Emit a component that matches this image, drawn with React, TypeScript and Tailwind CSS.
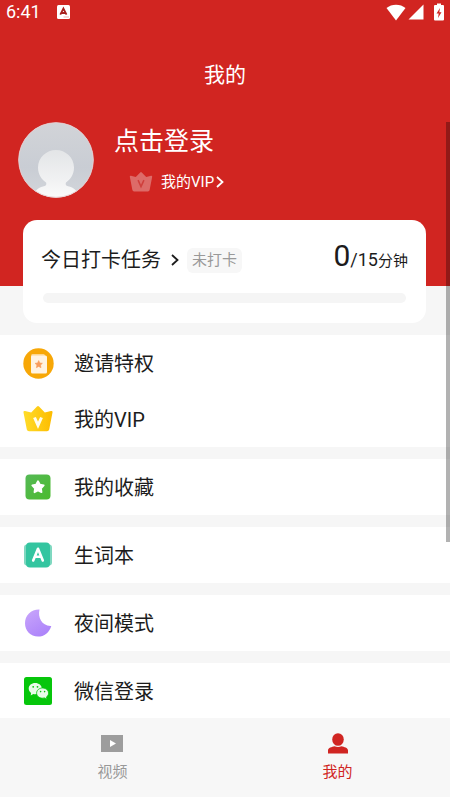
import type { ReactNode } from "react";

function Crown({ className, muted = false }: { className?: string; muted?: boolean }) {
  return (
    <svg viewBox="0 0 30 26" className={className} aria-hidden="true">
      <defs>
        <linearGradient id="crownGold" x1="0" y1="0" x2="1" y2="0">
          <stop offset="0" stopColor="#ffdc2a" />
          <stop offset="1" stopColor="#fdbc00" />
        </linearGradient>
      </defs>
      <path
        d="M14 0.6 Q15 -0.4 16 0.6 L21.8 6.6 L28 5 Q29.8 4.6 29.5 6.4 L26.2 23.4 Q25.8 25.2 24 25.2 H6 Q4.2 25.2 3.8 23.4 L0.5 6.4 Q0.2 4.6 2 5 L8.200 6.6 Z"
        fill={muted ? "#dd6b68" : "url(#crownGold)"}
      />
      <path
        d={muted ? "M11.2 10.5 L15 19 L18.8 10.5" : "M11.5 11.5 L15 19.3 L18.5 11.5"}
        fill="none"
        stroke={muted ? "#cf3f3c" : "#fffdf0"}
        strokeWidth={muted ? 2 : 3}
      />
    </svg>
  );
}

function InviteIcon() {
  return (
    <svg viewBox="0 0 32 32" className="size-8" aria-hidden="true">
      <circle cx="16.5" cy="16.5" r="15.2" fill="#f7a707" />
      <rect x="9" y="7" width="14" height="18" rx="1.5" fill="#fcd58f" />
      <rect x="9" y="8.5" width="16" height="18" rx="1.5" fill="#fff3e2" />
      <path d="M16.7 13.6 L17.8 16 L20.4 16.3 L18.5 18.1 L19 20.7 L16.7 19.4 L14.4 20.7 L14.9 18.1 L13 16.3 L15.6 16 Z" fill="#f99c5c" stroke="#f99c5c" strokeWidth="0.6" />
    </svg>
  );
}

function FavoriteIcon() {
  return (
    <svg viewBox="0 0 26 26" className="size-[26px]" aria-hidden="true">
      <defs>
        <linearGradient id="favGreen" x1="0" y1="0" x2="1" y2="1">
          <stop offset="0" stopColor="#55b956" />
          <stop offset="1" stopColor="#4bbb2e" />
        </linearGradient>
      </defs>
      <rect x="0.5" y="0.5" width="25" height="25" rx="4" fill="url(#favGreen)" />
      <path d="M13 7.2 L14.9 10.7 L18.7 11.4 L16 14.3 L16.5 18.2 L13 16.5 L9.5 18.2 L10 14.3 L7.3 11.4 L11.1 10.7 Z" fill="#fff" stroke="#fff" strokeWidth="1.8" strokeLinejoin="round" />
    </svg>
  );
}

function WordsIcon() {
  return (
    <svg viewBox="0 0 28 26" className="h-[26px] w-7" aria-hidden="true">
      <rect x="0" y="2.5" width="28" height="21" rx="3" fill="#7fd8c0" />
      <rect x="2" y="0.5" width="24" height="25" rx="4" fill="#34c5a0" />
      <path d="M9.2 18.5 L14 6.8 L18.8 18.5 M11 14.8 H17" fill="none" stroke="#fff" strokeWidth="2.6" strokeLinecap="round" strokeLinejoin="round" />
    </svg>
  );
}

function MoonIcon() {
  return (
    <svg viewBox="0 0 28 28" className="size-7" aria-hidden="true">
      <defs>
        <linearGradient id="moonPurple" x1="0" y1="0" x2="0.6" y2="1">
          <stop offset="0" stopColor="#c9a6fb" />
          <stop offset="1" stopColor="#ad84fa" />
        </linearGradient>
      </defs>
      <path d="M15.5 0.6 C13.5 8.5 18 17.5 27.3 16.9 C25.5 23.3 20.2 27.6 14 27.6 C6.5 27.6 1 21.7 1 14.3 C1 6.5 7.2 0.3 15.5 0.6 Z" fill="url(#moonPurple)" />
    </svg>
  );
}

function WeChatIcon() {
  return (
    <svg viewBox="0 0 28 28" className="size-7" aria-hidden="true">
      <rect width="28" height="28" rx="2.5" fill="#06c60b" />
      <path d="M11.2 6 C7.5 6 4.7 8.4 4.7 11.6 C4.7 13.4 5.6 15 7.1 16 L6.7 18.6 L9.3 17 C10 17.2 10.6 17.2 11.2 17.2 C15 17.2 17.8 14.8 17.8 11.6 C17.8 8.4 15 6 11.2 6 Z" fill="#e9fbe9" />
      <path d="M18.6 11 C15.2 11 12.6 13.2 12.6 16.1 C12.6 19 15.2 21.2 18.6 21.2 C19.3 21.2 20 21.1 20.6 20.9 L22.9 22.2 L22.5 19.9 C23.8 19 24.6 17.6 24.6 16.1 C24.6 13.2 22 11 18.6 11 Z" fill="#e9fbe9" stroke="#06c60b" strokeWidth="0.8" />
      <circle cx="9.2" cy="9.8" r="0.9" fill="#06c60b" />
      <circle cx="13.5" cy="9.8" r="0.9" fill="#06c60b" />
      <circle cx="16.6" cy="14.6" r="0.8" fill="#06c60b" />
      <circle cx="20.6" cy="14.6" r="0.8" fill="#06c60b" />
    </svg>
  );
}

function Avatar() {
  return (
    <svg viewBox="0 0 76 76" className="size-[76px] shrink-0" aria-hidden="true">
      <defs>
        <linearGradient id="avatarBack" x1="0" y1="0" x2="0" y2="1">
          <stop offset="0" stopColor="#d2d4d8" />
          <stop offset="0.6" stopColor="#c9cdd4" />
          <stop offset="1" stopColor="#d3d6db" />
        </linearGradient>
        <linearGradient id="avatarBody" x1="0" y1="0" x2="0" y2="1">
          <stop offset="0" stopColor="#e3e5e7" />
          <stop offset="0.6" stopColor="#f0f1f2" />
          <stop offset="1" stopColor="#fbfbfb" />
        </linearGradient>
        <clipPath id="avatarClip">
          <circle cx="38" cy="38" r="37.5" />
        </clipPath>
      </defs>
      <g clipPath="url(#avatarClip)">
        <rect width="76" height="76" fill="url(#avatarBack)" />
        <path d="M38 28 C47.5 28 56 35.5 56 45.5 C56 53 52 57.5 48 60.5 C47 63 48.5 64 51 64.5 C56 65.7 59.5 68.5 62 76 H14 C16.5 68.5 20 65.7 25 64.5 C27.5 64 29 63 28 60.5 C24 57.5 20 53 20 45.5 C20 35.5 28.5 28 38 28 Z" fill="url(#avatarBody)" />
      </g>
      <circle cx="38" cy="38" r="37.3" fill="none" stroke="#e6cfd1" strokeWidth="0.9" />
    </svg>
  );
}

function Chevron({ className }: { className?: string }) {
  return (
    <svg viewBox="0 0 8 12" className={className} fill="none" stroke="currentColor" strokeWidth="1.8" aria-hidden="true">
      <path d="M1 1 L6.5 6 L1 11" />
    </svg>
  );
}

function StatusBar() {
  return (
    <div className="flex h-6 items-center justify-between px-1.5">
      <div className="flex items-center gap-4">
        <span className="text-lg leading-6">6:41</span>
        <svg viewBox="0 0 13 14" className="h-3.5 w-[13px]" aria-hidden="true">
          <rect width="13" height="14" rx="1.5" fill="#fff" />
          <path d="M3.3 9.7 L6.4 3.5 L9.5 9.7 M4.4 8 H8.4" fill="none" stroke="#a8201e" strokeWidth="1.8" />
          <path d="M6.5 12 H12" stroke="#eeb0ae" strokeWidth="1" />
        </svg>
      </div>
      <div className="flex items-center gap-0.5">
        <svg viewBox="0 0 20 17" className="h-[17px] w-5" fill="#fff" aria-hidden="true">
          <path d="M0.5 4 C5.5 -0.5 14.5 -0.5 19.5 4 L10 16.5 Z" />
        </svg>
        <svg viewBox="0 0 16 16" className="size-4" fill="#fff" aria-hidden="true">
          <path d="M15.5 0.5 V15.5 H0.5 Z" />
        </svg>
        <svg viewBox="0 0 10 18" className="ml-2 h-[18px] w-2.5" aria-hidden="true">
          <path d="M3 0.5 H7 V2 H9 Q10 2 10 3 V16.5 Q10 17.5 9 17.5 H1 Q0 17.5 0 16.5 V3 Q0 2 1 2 H3 Z" fill="#fff" />
          <path d="M6 5 L2.5 10.5 H4.7 L4 15 L7.5 9.3 H5.3 Z" fill="#d02522" />
        </svg>
      </div>
    </div>
  );
}

function Row({ icon, label }: { icon: ReactNode; label: string }) {
  return (
    <button type="button" className="flex h-14 w-full items-center bg-white pl-[22px] text-left">
      <span className="flex w-8 justify-center">{icon}</span>
      <span className="ml-5 pt-0.5 text-xl text-[#1c1c1c]">{label}</span>
    </button>
  );
}

export default function App() {
  return (
    <div className="flex h-screen flex-col bg-[#f6f6f6] font-[Roboto,'Noto_Sans_CJK_SC',sans-serif]">
      <main className="relative min-h-0 flex-1 overflow-hidden">
        <header className="bg-[#d12521] pb-[88px] text-white">
          <StatusBar />
          <h1 className="pt-9 text-center text-[21px] leading-[30px]">我的</h1>
          <div className="flex items-center pt-8 pl-[18px]">
            <Avatar />
            <div className="ml-5 flex flex-col gap-2 pb-0.5">
              <button type="button" className="text-left text-[25px] leading-9">点击登录</button>
              <button type="button" className="ml-[15px] flex items-center pt-0.5 text-[15px] leading-6">
                <Crown muted className="mr-2 h-5 w-6" />
                我的VIP
                <Chevron className="ml-0.5 h-3 w-2" />
              </button>
            </div>
          </div>
        </header>

        <section className="relative mr-6 ml-[23px] -mt-[66px] rounded-[14px] bg-white px-[18px] pt-4 pb-5">
          <div className="flex h-12 items-center">
            <button type="button" className="flex items-center text-xl text-[#1c1c1c]">
              今日打卡任务
              <Chevron className="ml-2.5 h-3 w-2" />
            </button>
            <span className="ml-2 rounded-md bg-[#f7f7f7] px-[5px] text-[15px] leading-[25px] text-[#999]">未打卡</span>
            <p className="ml-auto pb-2.5 text-[#1c1c1c]">
              <span className="text-[30px]">0</span>
              <span className="text-lg">/15</span>
              <span className="text-[15px]">分钟</span>
            </p>
          </div>
          <div className="mx-0.5 mt-[9px] h-2.5 rounded-full bg-[#f5f5f5]" />
        </section>

        <div className="flex flex-col gap-3 pt-3">
          <div>
            <Row icon={<InviteIcon />} label="邀请特权" />
            <Row icon={<Crown className="h-[26px] w-[30px]" />} label="我的VIP" />
          </div>
          <Row icon={<FavoriteIcon />} label="我的收藏" />
          <Row icon={<WordsIcon />} label="生词本" />
          <Row icon={<MoonIcon />} label="夜间模式" />
          <Row icon={<WeChatIcon />} label="微信登录" />
        </div>

        <div className="absolute top-[122px] right-0 h-[420px] w-1 bg-black/30" />
      </main>

      <nav className="flex h-[79px] shrink-0 bg-[#f7f7f7] text-[15px] leading-6">
        <button type="button" className="flex flex-1 flex-col items-center pt-3.5 text-[#999]">
          <svg viewBox="0 0 24 24" className="mb-1 size-6" aria-hidden="true">
            <rect x="0" y="3" width="22" height="17" fill="#9d9d9d" />
            <path d="M9 8 L15 11.5 L9 15 Z" fill="#fff" />
          </svg>
          视频
        </button>
        <button type="button" className="flex flex-1 flex-col items-center pt-3.5 text-[#d02522]">
          <svg viewBox="0 0 24 24" className="mb-1 size-6" fill="#d02522" aria-hidden="true">
            <ellipse cx="12" cy="7.5" rx="5.8" ry="6.3" />
            <path d="M2 21.5 V18.5 C2 15.7 6 14.8 8.5 14.2 C10.5 15.2 13.5 15.2 15.5 14.2 C18 14.8 22 15.7 22 18.5 V21.5 Z" />
          </svg>
          我的
        </button>
      </nav>
    </div>
  );
}
